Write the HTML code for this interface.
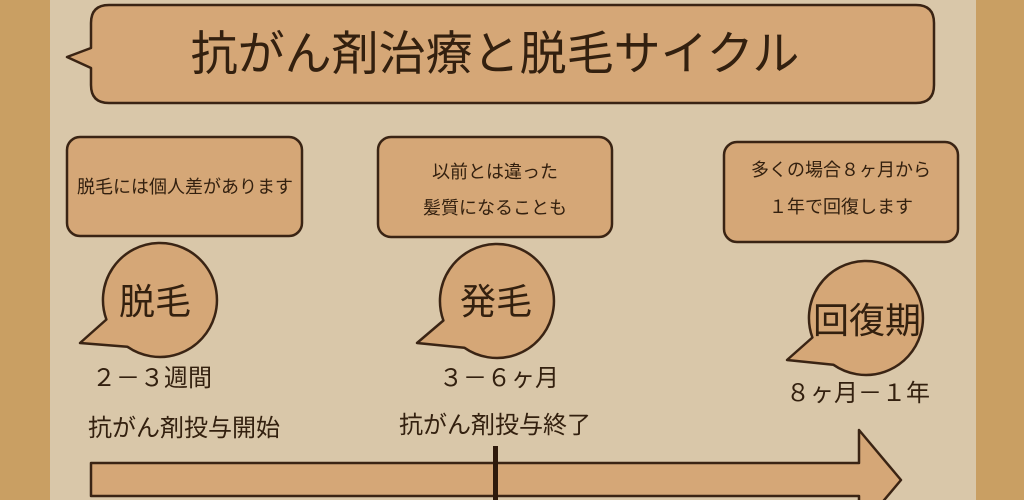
<!DOCTYPE html>
<html><head><meta charset="utf-8"><style>
html,body{margin:0;padding:0;width:1024px;height:500px;overflow:hidden;background:#c9a166}
svg{display:block}
text{font-family:"Liberation Sans","Noto Sans CJK JP",sans-serif;fill:#33200f}
</style></head><body>
<svg width="1024" height="500" viewBox="0 0 1024 500" xmlns="http://www.w3.org/2000/svg">
<rect x="0" y="0" width="1024" height="500" fill="#c99f63"/>
<rect x="50" y="0" width="926" height="500" fill="#d9c7a9"/>
<g fill="#d5a777" stroke="#3a2414" stroke-width="2.5" stroke-linejoin="round">
<path d="M109 5 H916 Q934 5 934 23 V85 Q934 103 916 103 H109 Q91 103 91 85 V68 L67 57 L91 48 V23 Q91 5 109 5 Z"/>
<rect x="67" y="137" width="235" height="99" rx="13"/>
<rect x="378" y="137" width="234" height="100" rx="13"/>
<rect x="724" y="142" width="234" height="100" rx="13"/>
<path d="M106.4 319.5 A57 57 0 1 1 127.3 346.7 L80 343 Z"/>
<path d="M443.4 320.5 A57 57 0 1 1 464.3 347.7 L417 343 Z"/>
<path d="M812.4 337.5 A57 57 0 1 1 833.3 364.7 L787 360 Z"/>
<path d="M91 463 H859 V430 L901 480 L859 530 V496 H91 Z"/>
</g>
<rect x="493" y="446" width="5" height="54" fill="#2e1a0c"/>
<text x="495" y="70" font-size="47" text-anchor="middle">抗がん剤治療と脱毛サイクル</text>
<text x="185" y="193" font-size="18" text-anchor="middle">脱毛には個人差があります</text>
<text x="495" y="178" font-size="18" text-anchor="middle">以前とは違った</text>
<text x="495" y="214" font-size="18" text-anchor="middle">髪質になることも</text>
<text x="841" y="176" font-size="18" text-anchor="middle">多くの場合８ヶ月から</text>
<text x="841" y="213" font-size="18" text-anchor="middle">１年で回復します</text>
<text x="155" y="314" font-size="36" text-anchor="middle">脱毛</text>
<text x="496" y="314" font-size="36" text-anchor="middle">発毛</text>
<text x="867" y="333" font-size="36" text-anchor="middle">回復期</text>
<text x="92" y="386" font-size="24">２－３週間</text>
<text x="439" y="386" font-size="24">３－６ヶ月</text>
<text x="786" y="401" font-size="24">８ヶ月－１年</text>
<text x="88" y="436" font-size="24">抗がん剤投与開始</text>
<text x="399" y="433" font-size="24">抗がん剤投与終了</text>
</svg>
</body></html>
